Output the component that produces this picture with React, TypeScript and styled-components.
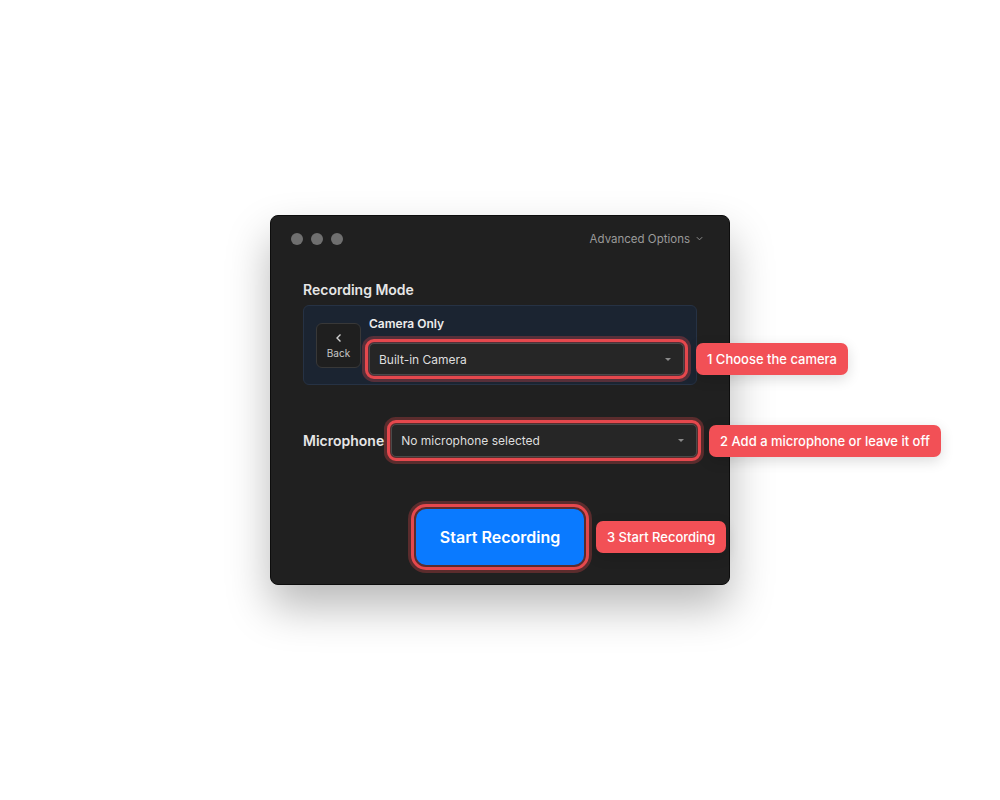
import React from 'react';
import styled, { createGlobalStyle, css } from 'styled-components';

const GlobalStyle = createGlobalStyle`
  body {
    margin: 0;
    background: #ffffff;
    font-family: Inter, 'Noto Sans', sans-serif;
  }
`;

// red focus ring used to call out the steps
const ring = (offset: number) => css`
  outline: 3px solid #e5484d;
  outline-offset: ${offset}px;
  box-shadow: 0 0 0 ${offset + 6}px rgba(229, 72, 77, 0.3);
`;

const App = () => {
  return (
    <Page>
      <GlobalStyle />
      <Window>
        <TitleBar>
          <Dots>
            <Dot />
            <Dot />
            <Dot />
          </Dots>
          <Advanced>
            Advanced Options
            <svg width="9" height="9" viewBox="0 0 10 10">
              <path d="M2 3.5 L5 6.5 L8 3.5" fill="none" stroke="#8f8f8f" strokeWidth="1.1" />
            </svg>
          </Advanced>
        </TitleBar>
        <Content>
          <SectionLabel>Recording Mode</SectionLabel>
          <ModePanel>
            <BackButton>
              <svg width="10" height="10" viewBox="0 0 10 10">
                <path d="M6.5 1.5 L3 5 L6.5 8.5" fill="none" stroke="#d0d0d0" strokeWidth="1.4" />
              </svg>
              <span>Back</span>
            </BackButton>
            <ModeColumn>
              <ModeTitle>Camera Only</ModeTitle>
              <Callout>
                <Select $highlight>
                  Built-in Camera
                  <Caret />
                </Select>
                <Badge>1 Choose the camera</Badge>
              </Callout>
            </ModeColumn>
          </ModePanel>
          <MicRow>
            <SectionLabel>Microphone</SectionLabel>
            <Callout $grow>
              <Select $highlight $tall>
                No microphone selected
                <Caret />
              </Select>
              <Badge>2 Add a microphone or leave it off</Badge>
            </Callout>
          </MicRow>
          <Footer>
            <Callout>
              <StartButton>Start Recording</StartButton>
              <Badge>3 Start Recording</Badge>
            </Callout>
          </Footer>
        </Content>
      </Window>
    </Page>
  );
};

const Page = styled.div`
  width: 1000px;
  height: 800px;
  display: flex;
  align-items: center;
  justify-content: center;
`;

const Window = styled.div`
  width: 460px;
  height: 370px;
  box-sizing: border-box;
  background: #202020;
  border: 1px solid #0d0d0d;
  border-radius: 8px;
  box-shadow: 0 22px 44px rgba(0, 0, 0, 0.28);
  display: flex;
  flex-direction: column;
`;

const TitleBar = styled.div`
  height: 45px;
  display: flex;
  align-items: center;
  justify-content: space-between;
  padding: 0 25px 0 20px;
`;

const Dots = styled.div`
  display: flex;
  gap: 8px;
`;

const Dot = styled.div`
  width: 12px;
  height: 12px;
  border-radius: 50%;
  background: #6f6f6f;
`;

const Advanced = styled.div`
  display: flex;
  align-items: center;
  gap: 5px;
  font-size: 11.5px;
  color: #9a9a9a;
`;

const Content = styled.div`
  flex: 1;
  display: flex;
  flex-direction: column;
  padding: 20px 32px 19px 32px;
`;

const SectionLabel = styled.div`
  font-size: 14px;
  font-weight: 600;
  line-height: 17px;
  color: #e6e6e6;
  white-space: nowrap;
`;

const ModePanel = styled.div`
  margin-top: 7px;
  height: 80px;
  box-sizing: border-box;
  display: flex;
  align-items: center;
  gap: 8px;
  padding: 0 12px;
  background: #1b2431;
  border: 1px solid #263244;
  border-radius: 6px;
`;

const BackButton = styled.div`
  width: 45px;
  height: 45px;
  box-sizing: border-box;
  flex-shrink: 0;
  display: flex;
  flex-direction: column;
  align-items: center;
  justify-content: center;
  gap: 4px;
  padding-top: 2px;
  background: #1f1f1f;
  border: 1px solid #383838;
  border-radius: 6px;
  font-size: 10px;
  color: #c8c8c8;
`;

const ModeColumn = styled.div`
  flex: 1;
  display: flex;
  flex-direction: column;
  padding-top: 2px;
`;

const ModeTitle = styled.div`
  font-size: 12px;
  font-weight: 600;
  line-height: 14px;
  color: #ececec;
  margin-bottom: 12px;
`;

const Callout = styled.div<{ $grow?: boolean }>`
  position: relative;
  display: flex;
  align-items: center;
  ${p => p.$grow && 'flex: 1;'}
`;

const Select = styled.div<{ $highlight?: boolean; $tall?: boolean }>`
  flex: 1;
  height: ${p => (p.$tall ? 33 : 32)}px;
  box-sizing: border-box;
  display: flex;
  align-items: center;
  justify-content: space-between;
  padding: 0 12px 0 9px;
  background: #262626;
  border: 1px solid #4a4a4a;
  border-radius: 5px;
  font-size: 12px;
  color: #dedede;
  ${p => p.$highlight && ring(1)}
`;

const Caret = styled.span`
  width: 0;
  height: 0;
  border-left: 3px solid transparent;
  border-right: 3px solid transparent;
  border-top: 3px solid #8a8a8a;
`;

const Badge = styled.div`
  position: absolute;
  left: calc(100% + 12px);
  top: 50%;
  transform: translateY(-50%);
  height: 32px;
  display: flex;
  align-items: center;
  padding: 0 11px;
  white-space: nowrap;
  background: #f25056;
  color: #ffffff;
  font-size: 13px;
  font-weight: 500;
  border-radius: 7px;
  box-shadow: 0 4px 14px rgba(0, 0, 0, 0.14);
`;

const MicRow = styled.div`
  margin-top: 39px;
  display: flex;
  align-items: center;
  gap: 7px;
`;

const Footer = styled.div`
  margin-top: auto;
  display: flex;
  justify-content: center;
`;

const StartButton = styled.div`
  width: 168px;
  height: 56px;
  display: flex;
  align-items: center;
  justify-content: center;
  background: #0a7aff;
  color: #ffffff;
  font-size: 16px;
  font-weight: 600;
  border-radius: 10px;
  ${ring(2)}
`;

export default App;
